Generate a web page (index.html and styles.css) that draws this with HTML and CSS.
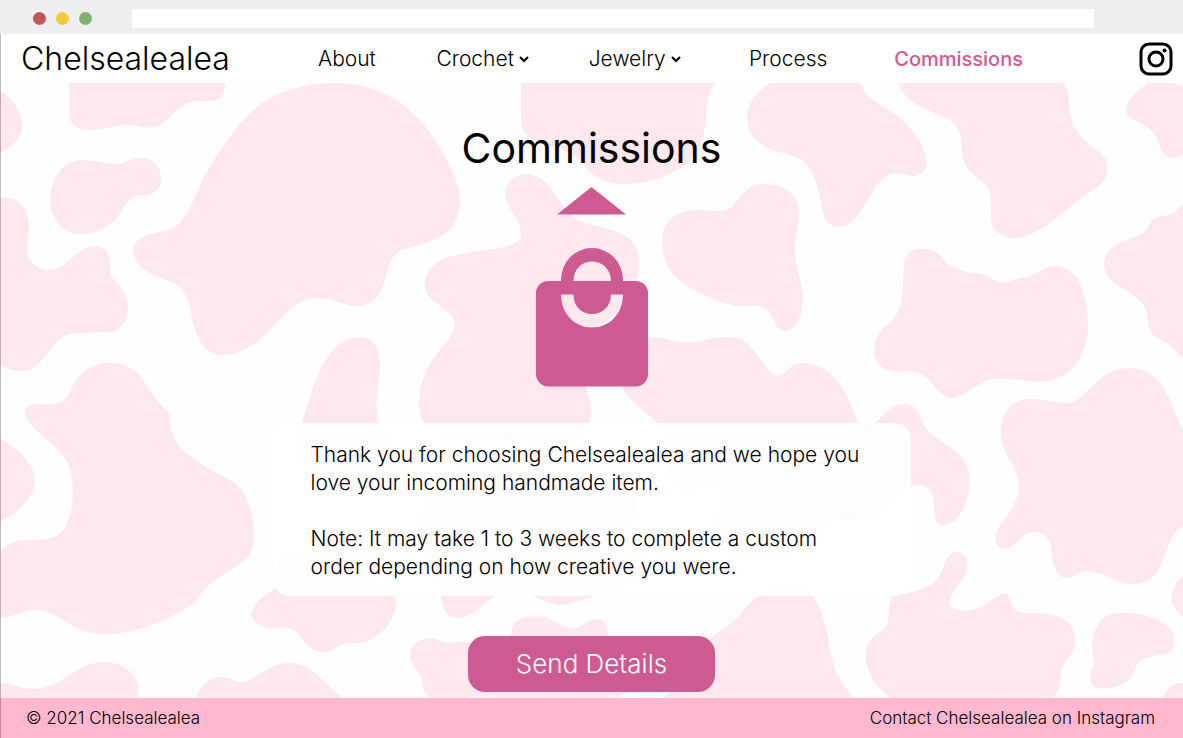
FILE: index.html
```html
<!DOCTYPE html>
<html lang="en">
<head>
<meta charset="utf-8">
<meta name="viewport" content="width=device-width, initial-scale=1">
<title>Commissions - Chelsealealea</title>
<link rel="stylesheet" href="styles.css">
</head>
<body>
<div class="page">
  <svg class="pattern" viewBox="0 0 1183 738" preserveAspectRatio="xMidYMid slice" aria-hidden="true">
    <path d="M0 91C14 99 22 112 22 126C22 139 11 147 0 153Z"/>
    <path d="M68 83H225C226 95 220 101 208 101C190 101 182 103 170 117C160 127 153 129 142 127C127 123 122 124 108 128C90 132 70 131 69 114C69 100 71 92 68 83Z"/>
    <path d="M80 160C98 160 107 165 118 164C128 163 132 157 144 158C155 159 161 168 161 178C161 190 154 195 144 195C129 195 127 203 120 213C112 226 97 234 82 234C61 234 51 218 50 202C50 180 62 161 80 160Z"/>
    <path d="M0 198C16 194 29 209 29 225L27 250C28 263 38 270 49 270C68 270 76 246 95 246C108 245 111 257 110 274C114 283 128 289 128 307C128 323 119 332 107 332L75 333C50 334 46 371 21 371C12 371 6 368 0 364Z"/>
    <path d="M338 83C385 84 417 110 437 143C450 164 460 182 460 203C459 232 438 240 408 248C387 253 389 270 382 288C376 302 366 306 357 306C342 305 332 298 315 298C288 299 276 330 252 345C241 352 233 355 222 355C204 354 195 338 191 312C187 292 181 285 166 280C149 274 133 265 133 251C134 233 158 234 173 228C190 219 193 197 205 175C220 150 235 124 262 103C285 88 311 83 338 83Z"/>
    <path d="M521 83V122C522 143 553 145 570 153C588 162 587 184 626 184C660 184 700 165 704 133C708 115 704 95 716 83Z"/>
    <path d="M770 83C755 93 747 104 747 119C747 134 757 144 773 150C790 156 804 155 813 174C824 200 819 226 838 227C857 226 863 206 875 188C889 168 896 173 911 176C925 177 929 166 925 153C918 134 904 120 892 112C875 102 864 95 860 83Z"/>
    <path d="M897 83C904 97 916 106 932 112C949 118 959 124 961 138C963 153 961 164 973 174C985 183 991 187 991 203L991 220C993 231 1001 238 1014 238C1040 238 1065 208 1090 192C1103 184 1107 178 1107 169C1107 157 1103 155 1095 149C1081 139 1070 125 1069 107C1069 95 1068 88 1063 83Z"/>
    <path d="M1148 83C1132 94 1126 103 1126 112C1127 120 1143 121 1153 132C1161 142 1160 159 1175 158L1183 155V86L1172 83Z"/>
    <path d="M1183 203C1175 215 1169 215 1158 217C1147 220 1151 231 1138 236C1122 241 1104 247 1104 265C1104 286 1137 290 1145 308C1150 320 1146 331 1156 337C1167 342 1175 349 1183 358Z"/>
    <path d="M528 174C510 175 503 187 506 199C511 214 521 220 521 235C520 250 490 247 452 256C433 261 425 273 425 285C425 300 441 304 452 316C460 331 447 340 440 350C426 366 419 385 419 404C419 421 428 434 449 435C500 432 520 442 550 445C581 446 592 425 591 408C590 394 583 386 583 365C583 345 590 330 605 322C618 314 639 290 639 262C638 236 620 232 596 226C555 219 559 178 528 174Z"/>
    <path d="M648 337C670 338 675 343 693 342C711 340 736 330 750 346C761 358 769 377 778 376C788 374 789 363 802 363C831 364 845 388 853 410C857 422 861 426 868 426C877 425 883 412 894 406C907 401 917 405 921 419C926 435 940 439 953 449C972 463 972 485 966 502C960 520 949 526 942 525C930 523 937 500 930 491C925 482 915 484 905 489C893 495 889 509 878 517C865 523 847 515 834 521C822 525 817 538 807 546C797 554 783 555 765 553C740 555 712 556 710 535C711 520 724 511 724 495C722 482 710 477 703 483C698 493 690 494 683 492C667 486 669 465 668 447C667 425 650 418 637 405C625 395 616 380 616 365C616 340 630 337 648 337Z"/>
    <path d="M662 240C663 220 677 210 698 210C720 211 728 214 737 201C745 189 753 184 766 184C785 184 799 195 799 214C796 235 793 250 797 268C804 290 804 301 801 313C797 327 791 331 785 331C776 331 774 319 769 312C763 303 753 306 740 306C723 305 708 296 692 289C670 276 662 262 662 240Z"/>
    <path d="M919 249C909 250 905 256 904 264L902 299C900 312 893 322 883 328C875 337 873 349 875 357C881 375 901 371 911 371C930 372 937 397 951 398C966 397 979 380 995 379C1015 378 1035 384 1052 380C1076 374 1088 349 1088 324C1087 298 1081 267 1054 266C1041 267 1034 277 1022 278L1002 283C990 279 988 274 974 273C963 272 950 268 943 259C938 251 928 248 919 249Z"/>
    <path d="M1027 399C1045 398 1059 405 1073 402C1090 396 1097 368 1131 368C1165 370 1169 402 1183 430V526C1167 535 1168 555 1157 572C1150 582 1142 584 1132 584C1117 584 1102 571 1086 571C1077 572 1073 578 1067 578C1056 577 1053 566 1052 553C1051 539 1045 532 1035 532C1020 532 1016 549 1004 549C996 548 994 541 996 533C1002 519 1018 508 1019 487C1019 465 1000 455 1001 431C1001 412 1011 400 1027 399Z"/>
    <path d="M110 363C91 363 80 373 72 387C67 400 61 404 50 404C39 403 25 402 25 413C30 432 57 442 68 463C75 481 74 508 67 523C60 541 44 540 25 540C14 540 5 545 0 551V618C13 618 21 610 36 610C56 610 68 628 93 633C129 637 160 625 195 603C208 577 235 572 249 556C256 545 253 527 252 513C243 488 240 486 226 478C207 468 175 452 171 429C169 415 171 414 164 408C155 398 148 389 144 381C137 369 124 363 110 363Z"/>
    <path d="M0 438C14 448 35 461 35 481C33 501 15 514 0 522Z"/>
    <path d="M359 337C340 338 330 352 321 367C311 388 309 404 302 421C296 440 297 455 307 465C325 482 360 478 381 473C401 460 389 443 380 426C372 405 380 385 380 365C380 348 373 337 359 337Z"/>
    <path d="M287 553C300 549 314 562 319 548C324 529 344 526 355 537C365 552 357 574 371 583C388 586 398 592 396 606C391 632 369 644 352 643C340 641 335 652 324 652C307 652 304 638 295 631C286 624 277 629 267 628C253 624 250 616 252 611C257 599 268 594 275 588C278 578 272 560 287 553Z"/>
    <path d="M0 683C16 684 20 689 33 689C62 689 75 662 105 662C130 663 142 682 138 698H0Z"/>
    <path d="M196 698C200 684 212 676 223 677C234 679 237 685 247 681C262 674 272 663 290 663C312 663 326 686 343 698Z"/>
    <path d="M455 470C490 450 530 480 560 478C600 472 640 480 636 510C627 528 630 535 643 548C655 575 628 586 605 593C585 598 573 605 558 605C541 602 532 591 508 592C485 594 479 618 457 618C443 616 441 605 441 590C441 570 420 555 415 533C413 510 440 495 455 470Z"/>
    <path d="M410 654C412 640 424 639 432 638C442 640 443 644 455 642C490 641 510 652 512 630C513 617 535 614 548 618C560 624 571 631 579 627C590 620 602 615 606 625C611 640 608 660 625 670L645 680L618 698H432C421 694 424 684 420 674C416 667 410 664 410 654Z"/>
    <path d="M663 698C678 687 684 683 695 662C705 632 730 632 745 608C760 592 775 584 790 584C812 584 822 606 828 638C831 668 842 684 854 698Z"/>
    <path d="M892 596C915 592 935 588 941 573C947 558 949 552 957 552C968 553 969 566 965 575C956 588 946 600 950 606C957 613 973 612 985 605C995 598 1001 592 1007 594C1012 598 1008 612 1026 613C1043 613 1065 613 1073 629C1081 654 1064 656 1061 672C1060 685 1060 693 1051 698H892C875 687 865 671 866 655C866 641 873 635 884 630C890 624 888 606 892 596Z"/>
    <path d="M1117 613C1145 611 1169 622 1174 635C1175 651 1171 653 1159 655C1130 660 1140 665 1130 679C1119 687 1109 689 1101 688C1086 687 1090 675 1094 665C1094 655 1092 657 1092 645C1095 622 1103 615 1117 613Z"/>
    <path d="M1183 575C1169 591 1166 602 1183 617Z"/>
    <path d="M1163 698C1166 687 1174 683 1183 683V698Z"/>
  </svg>

  <div class="browser-bar">
    <div class="dots">
      <span class="dot dot-red"></span>
      <span class="dot dot-yellow"></span>
      <span class="dot dot-green"></span>
    </div>
    <input class="address" type="text" aria-label="Address">
  </div>

  <header class="header">
    <a class="logo" href="#">Chelsealealea</a>
    <nav class="nav" aria-label="Main">
      <a class="nav-item" href="#">About</a>
      <button class="nav-item" type="button" aria-haspopup="true">Crochet
        <svg class="chevron" viewBox="0 0 10 8" aria-hidden="true"><path d="M1 2L5 6L9 2"/></svg>
      </button>
      <button class="nav-item" type="button" aria-haspopup="true">Jewelry
        <svg class="chevron" viewBox="0 0 10 8" aria-hidden="true"><path d="M1 2L5 6L9 2"/></svg>
      </button>
      <a class="nav-item" href="#">Process</a>
      <a class="nav-item nav-current" href="#" aria-current="page">Commissions</a>
    </nav>
    <a class="instagram" href="#" aria-label="Instagram">
      <svg viewBox="0 0 34 34" aria-hidden="true">
        <rect x="2" y="2" width="30" height="30" rx="8"/>
        <circle cx="17" cy="17" r="7"/>
        <circle class="lens" cx="25.500" cy="8.500" r="2"/>
      </svg>
    </a>
  </header>

  <main class="main">
    <h1 class="title">Commissions</h1>
    <svg class="arrow" viewBox="0 0 69 28" aria-hidden="true"><path d="M34.500 0L69 27.500H0Z"/></svg>
    <svg class="bag" viewBox="0 0 112 139" aria-hidden="true">
      <path fill-rule="evenodd" d="M12 33H25V32A31 32 0 0 1 87 32V33H100A12 12 0 0 1 112 45V126A12 12 0 0 1 100 138.500H12A12 12 0 0 1 0 126V45A12 12 0 0 1 12 33ZM37.500 33H75C75 22 67 13.500 56 13.500C45 13.500 37.500 22 37.500 33ZM25 46.500C25 66 39 79.500 56 79.500C73 79.500 87 66 87 46.500H75C75 58 67 66 56 66C45 66 37.500 58 37.500 46.500Z"/>
    </svg>
    <section class="message">
      <p>Thank you for choosing Chelsealealea and we hope you love your incoming handmade item.</p>
      <p>Note: It may take 1 to 3 weeks to complete a custom order depending on how creative you were.</p>
    </section>
    <button class="send" type="button">Send Details</button>
  </main>

  <footer class="footer">
    <span>© 2021 Chelsealealea</span>
    <a class="contact" href="#">Contact Chelsealealea on Instagram</a>
  </footer>
</div>
</body>
</html>
```

FILE: styles.css
```css
* {
  box-sizing: border-box;
}

body {
  margin: 0;
  font-family: Inter, "Open Sans", sans-serif;
  font-weight: 300;
  font-size: 21px;
  line-height: 28px;
  color: #000;
  background: #fefefe;
}

a {
  color: inherit;
  text-decoration: none;
}

button {
  font: inherit;
  color: inherit;
  border: 0;
  padding: 0;
  background: none;
  cursor: pointer;
}

.page {
  position: relative;
  isolation: isolate;
  display: flex;
  flex-direction: column;
  min-height: 100vh;
  overflow: hidden;
}

.page::after {
  content: "";
  position: absolute;
  inset: 34px auto 0 0;
  width: 1px;
  background: rgba(90, 60, 70, 0.35);
}

.pattern {
  position: absolute;
  inset: 0;
  z-index: -1;
  width: 100%;
  height: 100%;
  fill: #fde8ee;
}

.browser-bar {
  display: flex;
  align-items: center;
  gap: 40px;
  height: 34px;
  padding: 3px 89px 0 33px;
  background: #eee;
}

.dots {
  display: flex;
  gap: 10px;
}

.dot {
  width: 13px;
  height: 13px;
  border-radius: 50%;
}

.dot-red {
  background: #c15757;
}

.dot-yellow {
  background: #f3ca3a;
}

.dot-green {
  background: #84b06f;
}

.address {
  flex: 1;
  height: 19px;
  border: 0;
  background: #fff;
}

.header {
  display: flex;
  align-items: center;
  height: 49px;
  padding: 0 10px 0 21px;
  background: #fff;
}

.logo {
  flex: 0 0 297px;
  font-size: 32px;
}

.nav {
  flex: 1;
  display: grid;
  grid-template-columns: 119fr 153fr 161fr 146fr 126fr;
  margin-right: 116px;
}

.nav-item {
  display: flex;
  align-items: center;
  gap: 5px;
  white-space: nowrap;
}

.nav-current {
  font-size: 20px;
  font-weight: 500;
  color: #cd5a91;
}

.chevron {
  width: 10px;
  height: 8px;
  fill: none;
  stroke: #000;
  stroke-width: 2;
}

.instagram svg {
  display: block;
  width: 34px;
  height: 34px;
  fill: none;
  stroke: #000;
  stroke-width: 3;
}

.instagram .lens {
  fill: #000;
  stroke: none;
}

.main {
  flex: 1;
  display: flex;
  flex-direction: column;
  align-items: center;
  padding: 41px 16px 6px;
}

.title {
  margin: 0;
  font-size: 41px;
  font-weight: 400;
  line-height: 48px;
}

.arrow {
  width: 69px;
  height: 28px;
  margin-top: 15px;
  fill: #cd5a91;
}

.bag {
  width: 112px;
  height: 139px;
  margin-top: 33px;
  fill: #cd5a91;
}

.message {
  width: 638px;
  max-width: 100%;
  margin-top: 36px;
  padding: 18px 44px 15px 38px;
  border-radius: 16px;
  background: rgba(255, 255, 255, 0.85);
}

.message p {
  margin: 0;
}

.message p + p {
  margin-top: 28px;
}

.send {
  margin-top: 40px;
  padding: 14px 48px;
  border-radius: 17px;
  font-size: 26px;
  color: #fff;
  background: #cd5a91;
}

.footer {
  display: flex;
  align-items: center;
  justify-content: space-between;
  height: 40px;
  padding: 0 28px 0 26px;
  font-size: 17px;
  background: #ffb8ce;
}
```
